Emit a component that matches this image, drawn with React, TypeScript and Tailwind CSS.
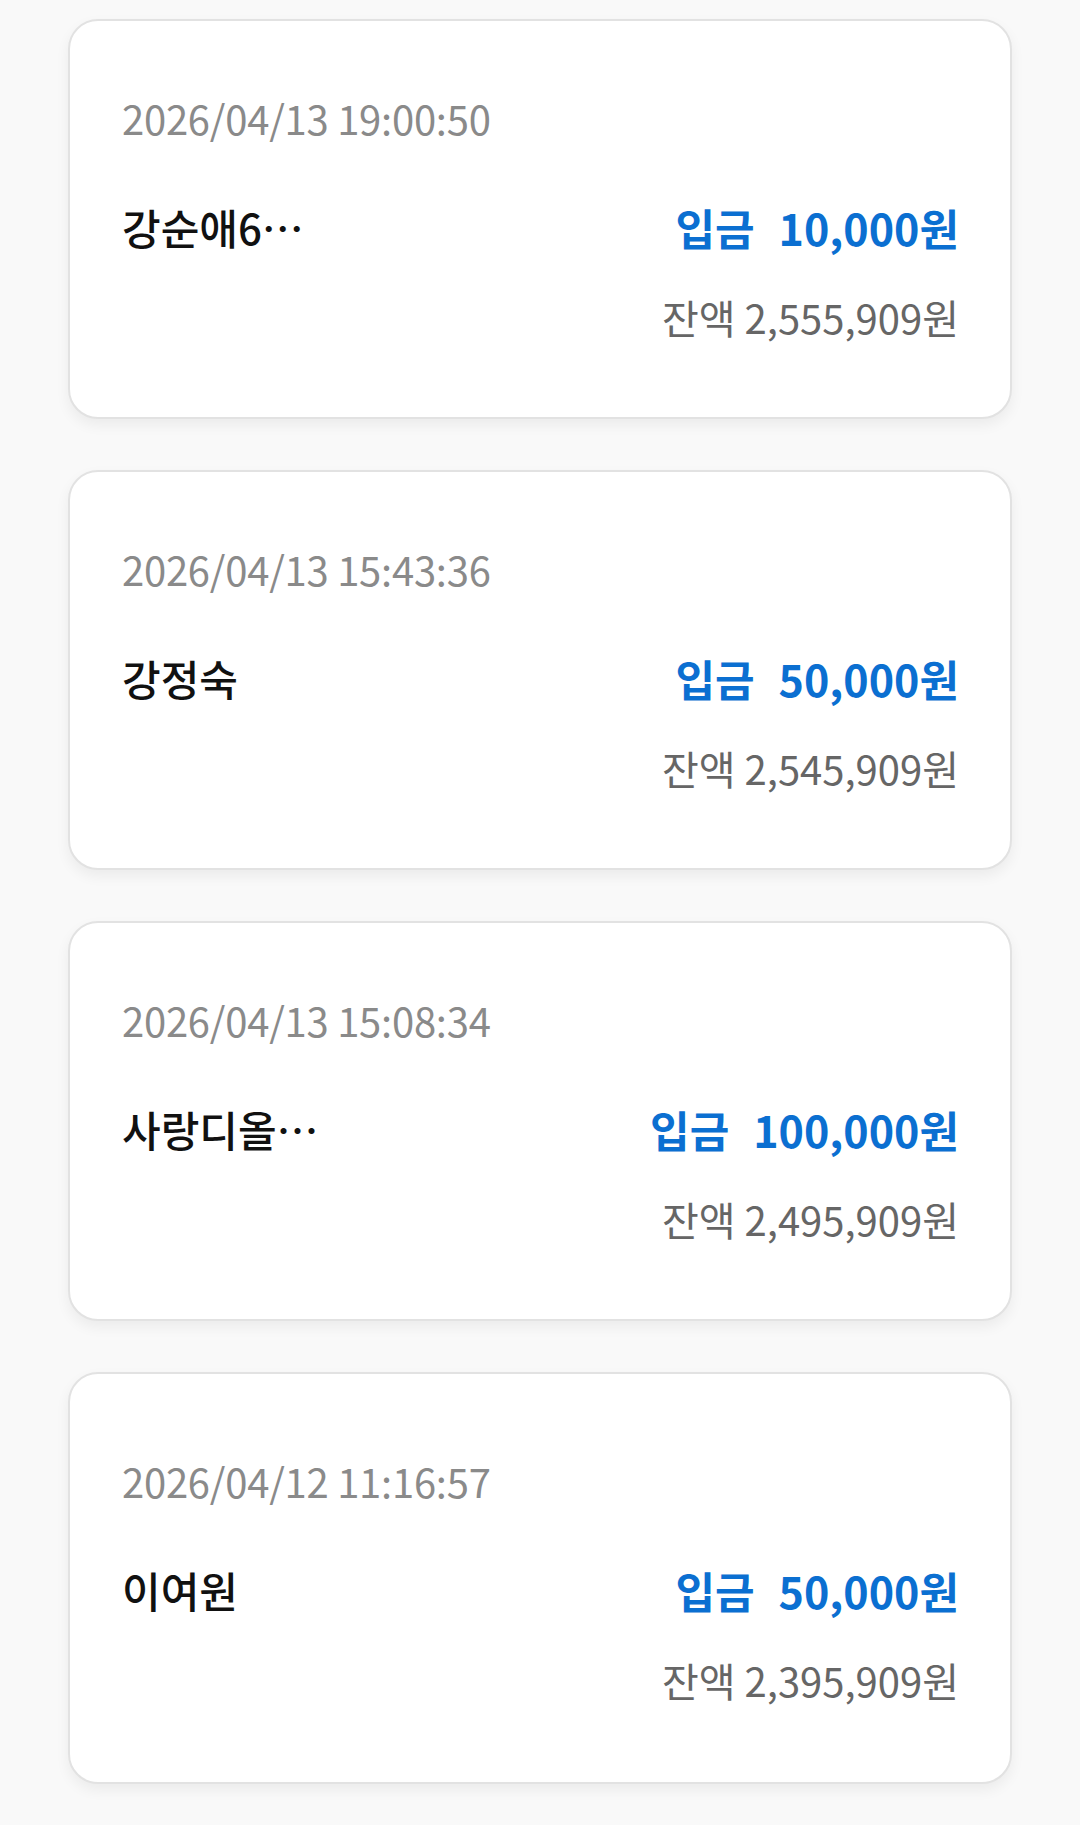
import React from "react";

interface Tx {
  date: string;
  name: string;
  amount: string;
  balance: string;
  last?: boolean;
}

const rows: Tx[] = [
  { date: "2026/04/13 19:00:50", name: "강순애6…", amount: "10,000원", balance: "잔액 2,555,909원" },
  { date: "2026/04/13 15:43:36", name: "강정숙", amount: "50,000원", balance: "잔액 2,545,909원" },
  { date: "2026/04/13 15:08:34", name: "사랑디올…", amount: "100,000원", balance: "잔액 2,495,909원" },
  { date: "2026/04/12 11:16:57", name: "이여원", amount: "50,000원", balance: "잔액 2,395,909원", last: true },
];

function TxCard({ tx }: { tx: Tx }) {
  return (
    <div
      className={`rounded-[30px] border-2 border-[#e2e2e2] bg-white shadow-[0_6px_14px_rgba(0,0,0,0.06)] pl-[52px] pr-[51px] ${
        tx.last ? "pt-[83px] pb-[78px]" : "pt-[73px] pb-[76px]"
      }`}
    >
      <div className="text-[40px] leading-[48px] text-[#8a8a8a] tracking-[-0.25px]">{tx.date}</div>
      <div className="mt-[59px] flex items-center justify-between">
        <div className="text-[42px] leading-[52px] font-medium text-[#111]">{tx.name}</div>
        <div className="flex gap-[24px] text-[43px] leading-[52px] font-semibold text-[#0b6fd1]">
          <span>입금</span>
          <span>{tx.amount}</span>
        </div>
      </div>
      <div className="mt-[40px] text-right text-[40px] leading-[48px] text-[#666]">{tx.balance}</div>
    </div>
  );
}

export default function App() {
  return (
    <div
      className="min-h-[1825px] w-[1080px] bg-[#f9f9f9] pt-[19px] px-[68px] flex flex-col gap-[51px]"
      style={{ fontFamily: '"Noto Sans CJK KR", "Noto Sans", sans-serif' }}
    >
      {rows.map((tx) => (
        <TxCard key={tx.date} tx={tx} />
      ))}
    </div>
  );
}
